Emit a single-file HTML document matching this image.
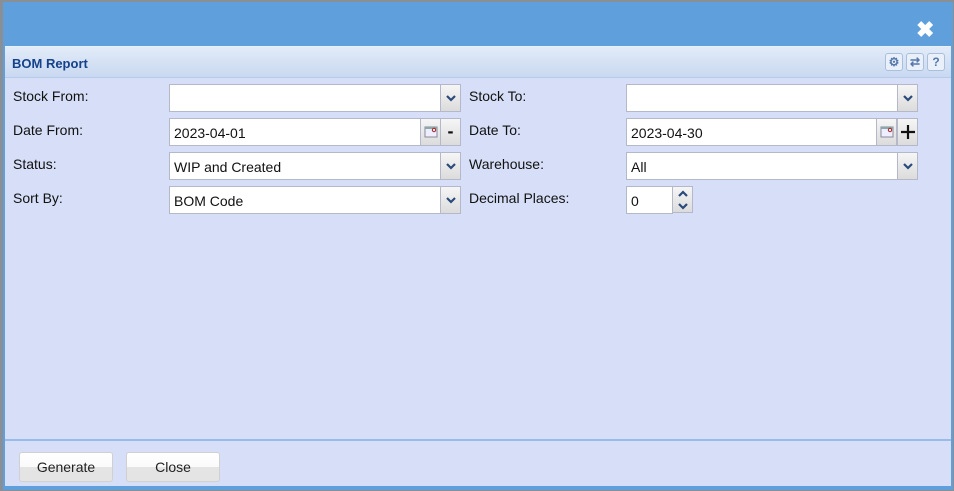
<!DOCTYPE html>
<html><head><style>
*{box-sizing:border-box;margin:0;padding:0}
body{width:954px;height:491px;background:#8a8f96;position:relative;overflow:hidden;font-family:"Liberation Sans",sans-serif;font-size:14px;color:#111}
.win{position:absolute;left:3px;top:2px;width:950px;height:488px;background:#5fa0dc}
.x{position:absolute;left:913px;top:15px;color:#fff;font-size:22px;font-weight:bold}
.panel{position:absolute;left:5px;top:46px;width:946px;height:440px;background:#d6dff7}
.hdr{height:32px;background:linear-gradient(#e2ebf8,#c9d9f1);border-top:1px solid #eaf1fb;border-bottom:1px solid #b7cbe9;position:relative}
.hdr b{position:absolute;left:7px;top:9px;font-size:13px;color:#15428b}
.tb{position:absolute;top:6px;width:18px;height:18px;border:1px solid #a9bfdc;border-radius:3px;background:#e9f0fa;color:#5577aa;font-size:12px;font-weight:bold;text-align:center;line-height:16px}
.lbl{position:absolute;font-size:14px}
.inp{position:absolute;height:28px;background:#fff;border:1px solid #b5b8c8;padding:6px 4px;font-size:14px}
.trig{position:absolute;width:21px;height:28px;border:1px solid #b5b8c8;background:linear-gradient(#f6f6f6,#dcdcdc);text-align:center;color:#2b4a7c}
.trig svg{margin-top:9px}
.sep{position:absolute;left:0;top:393px;width:946px;height:2px;background:#99bbe8}
.btn{position:absolute;top:406px;width:94px;height:30px;border:1px solid #d0d0d0;border-radius:3px;background:linear-gradient(#fff 0,#fafafa 50%,#e4e4e4 50%,#e4e4e4);text-align:center;line-height:28px;font-size:14px;color:#222}
</style></head><body>
<div class="win">
<div class="x">✖</div>
</div>
<div class="panel">
<div class="hdr"><b>BOM Report</b>
<div class="tb" style="left:880px">⚙</div><div class="tb" style="left:901px">⇄</div><div class="tb" style="left:922px">?</div>
</div>
</div>
<div class="lbl" style="left:13px;top:88px">Stock From:</div>
<div class="lbl" style="left:13px;top:122px">Date From:</div>
<div class="lbl" style="left:13px;top:156px">Status:</div>
<div class="lbl" style="left:13px;top:190px">Sort By:</div>
<div class="lbl" style="left:469px;top:88px">Stock To:</div>
<div class="lbl" style="left:469px;top:122px">Date To:</div>
<div class="lbl" style="left:469px;top:156px">Warehouse:</div>
<div class="lbl" style="left:469px;top:190px">Decimal Places:</div>

<div class="inp" style="left:169px;top:84px;width:272px"></div>
<div class="trig" style="left:440px;top:84px"><svg width="12" height="8"><path d="M2 2l4 4 4-4" stroke="#2b4a7c" stroke-width="2.2" fill="none"/></svg></div>
<div class="inp" style="left:169px;top:118px;width:252px">2023-04-01</div>
<div class="trig" style="left:420px;top:118px"><svg width="14" height="12" style="margin-top:7px"><rect x="1" y="1" width="12" height="10" fill="#eef" stroke="#889"/><rect x="1" y="1" width="12" height="2" fill="#8aa"/><circle cx="10" cy="4" r="1.7" fill="none" stroke="#a22"/></svg></div>
<div class="trig" style="left:440px;top:118px;font-weight:bold;font-size:18px;line-height:24px;color:#111">-</div>
<div class="inp" style="left:169px;top:152px;width:272px">WIP and Created</div>
<div class="trig" style="left:440px;top:152px"><svg width="12" height="8"><path d="M2 2l4 4 4-4" stroke="#2b4a7c" stroke-width="2.2" fill="none"/></svg></div>
<div class="inp" style="left:169px;top:186px;width:272px">BOM Code</div>
<div class="trig" style="left:440px;top:186px"><svg width="12" height="8"><path d="M2 2l4 4 4-4" stroke="#2b4a7c" stroke-width="2.2" fill="none"/></svg></div>

<div class="inp" style="left:626px;top:84px;width:272px"></div>
<div class="trig" style="left:897px;top:84px"><svg width="12" height="8"><path d="M2 2l4 4 4-4" stroke="#2b4a7c" stroke-width="2.2" fill="none"/></svg></div>
<div class="inp" style="left:626px;top:118px;width:252px">2023-04-30</div>
<div class="trig" style="left:876px;top:118px"><svg width="14" height="12" style="margin-top:7px"><rect x="1" y="1" width="12" height="10" fill="#eef" stroke="#889"/><rect x="1" y="1" width="12" height="2" fill="#8aa"/><circle cx="10" cy="4" r="1.7" fill="none" stroke="#a22"/></svg></div>
<div class="trig" style="left:897px;top:118px"><svg width="14" height="14" style="margin-top:6px"><path d="M7 0v14M0 7h14" stroke="#111" stroke-width="2.2"/></svg></div>
<div class="inp" style="left:626px;top:152px;width:272px">All</div>
<div class="trig" style="left:897px;top:152px"><svg width="12" height="8"><path d="M2 2l4 4 4-4" stroke="#2b4a7c" stroke-width="2.2" fill="none"/></svg></div>
<div class="inp" style="left:626px;top:186px;width:47px">0</div>
<div class="trig" style="left:672px;top:186px;height:27px"><svg width="12" height="22" style="margin-top:2px"><path d="M2 7l4-4 4 4M2 15l4 4 4-4" stroke="#2b4a7c" stroke-width="2.2" fill="none"/></svg></div>

<div style="position:absolute;left:5px;top:46px;width:946px;height:440px;pointer-events:none">
<div class="sep"></div>
<div class="btn" style="left:14px">Generate</div>
<div class="btn" style="left:121px">Close</div>
</div>
</body></html>
